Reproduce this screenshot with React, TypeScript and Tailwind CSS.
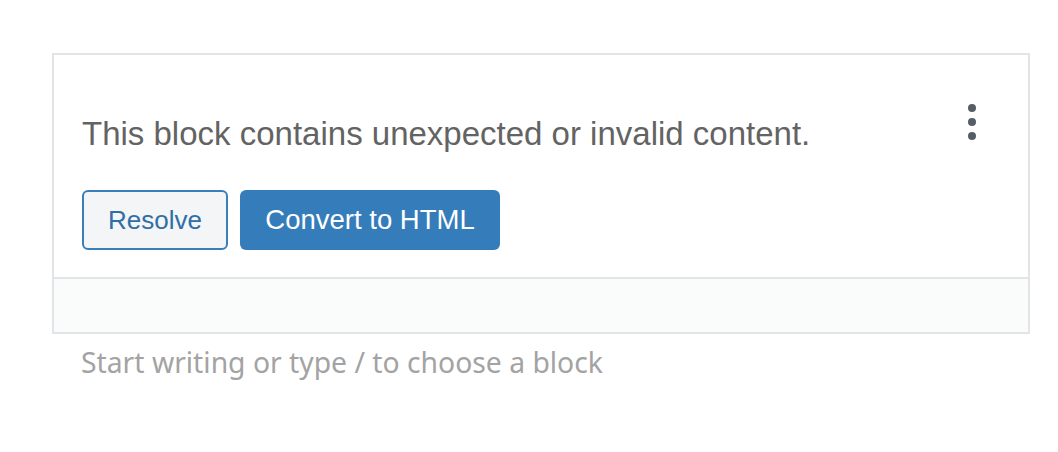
export default function App() {
  return (
    <div className="w-[1058px] h-[452px] bg-white pt-[53px] pl-[52px]" style={{ fontFamily: '"Liberation Sans", Arial, sans-serif' }}>
      <div className="w-[978px] border-2 border-[#e3e4e8] relative">
        <div className="pt-[59px] px-[28px] pb-[27px] bg-white">
          <p className="text-[33px] leading-[40px] text-[#636363]">This block contains unexpected or invalid content.</p>
          <div className="flex gap-[12px] mt-[36px]">
            <button className="h-[60px] w-[146px] rounded-[6px] border-2 border-[#3a7fb8] bg-[#f3f5f6] text-[#2f6fa6] text-[26px]">Resolve</button>
            <button className="h-[60px] w-[260px] rounded-[6px] bg-[#357dba] text-white text-[27.5px]">Convert to HTML</button>
          </div>
          <div className="absolute right-[52px] top-[49px] flex flex-col gap-[6px]">
            <span className="block w-[8px] h-[8px] rounded-full bg-[#555d66]" />
            <span className="block w-[8px] h-[8px] rounded-full bg-[#555d66]" />
            <span className="block w-[8px] h-[8px] rounded-full bg-[#555d66]" />
          </div>
        </div>
        <div className="h-[55px] border-t-2 border-[#e3e4e8] bg-[#fafbfb]" />
      </div>
      <p className="pl-[29px] mt-[8px] text-[28.3px] leading-[40px] text-[#a3a3a3]" style={{ fontFamily: '"Noto Sans", sans-serif' }}>Start writing or type / to choose a block</p>
    </div>
  );
}
